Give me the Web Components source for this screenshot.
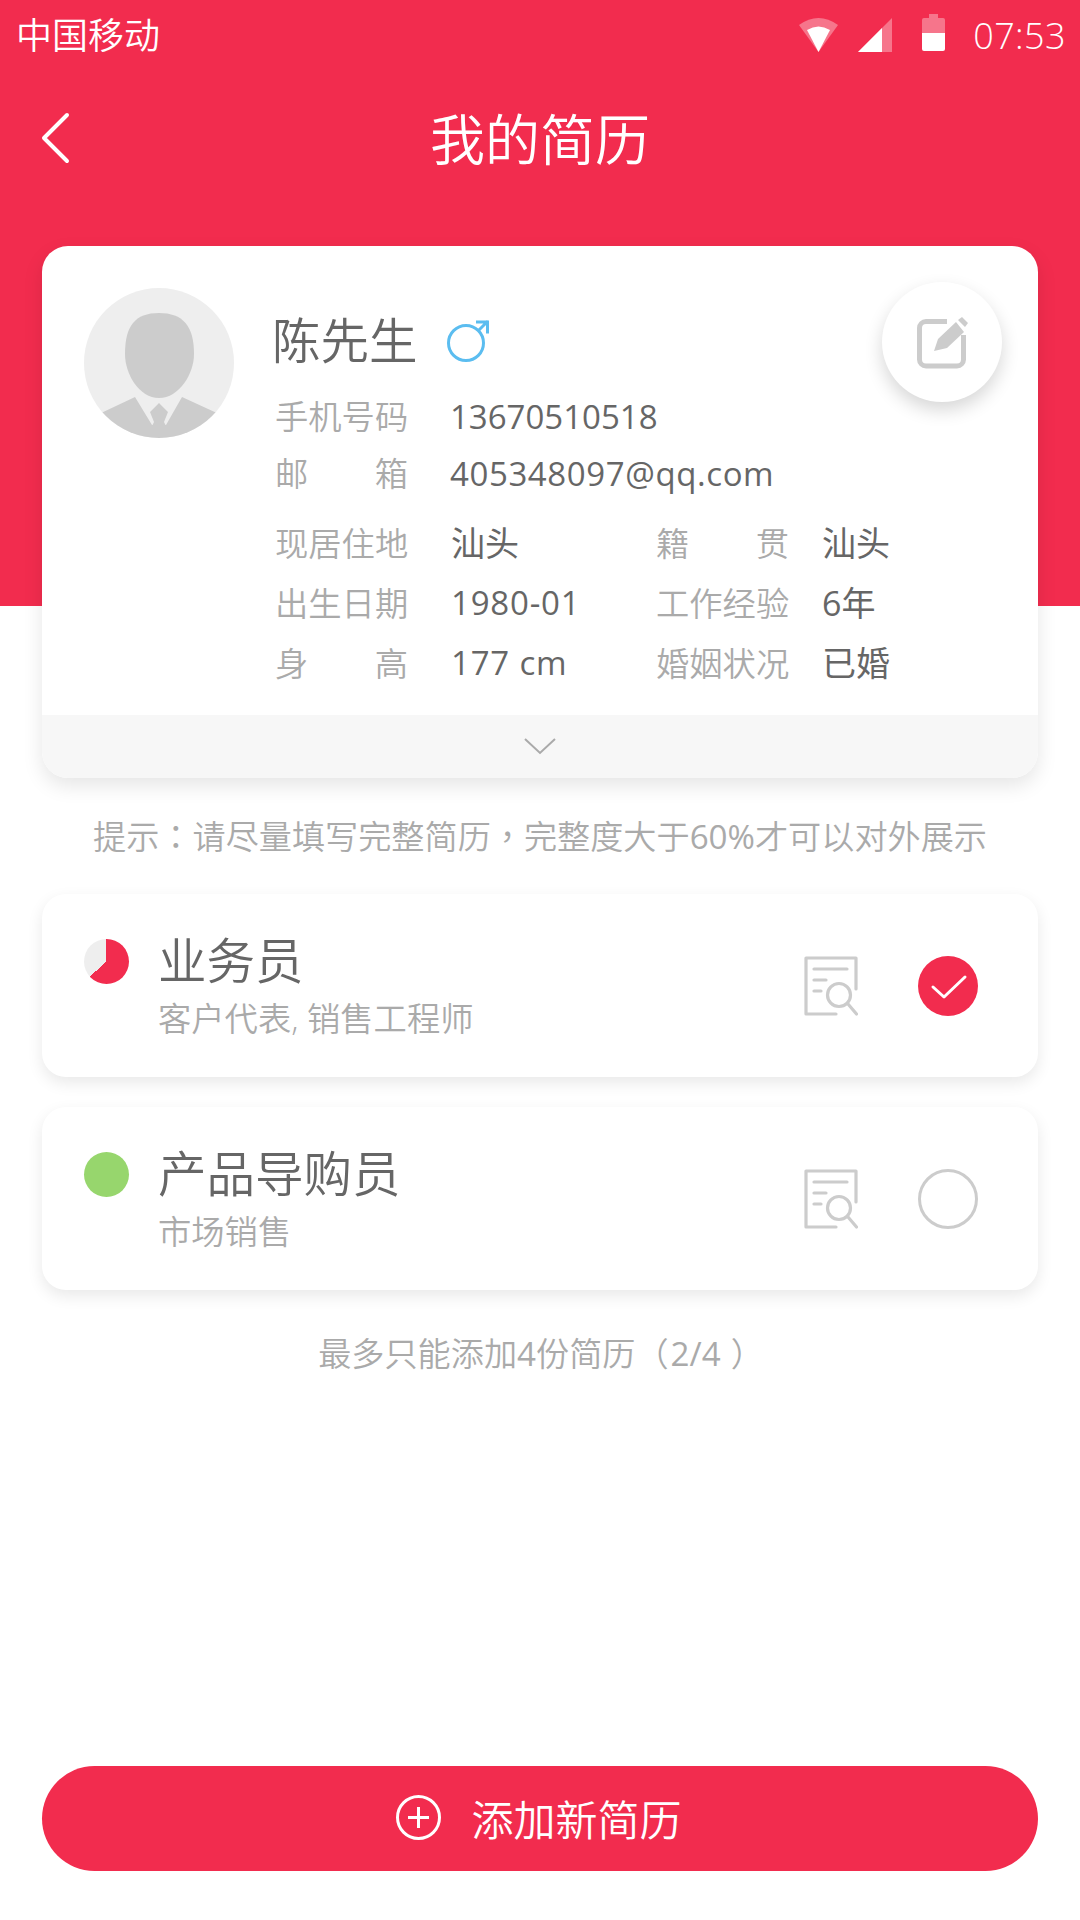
<!DOCTYPE html>
<html lang="zh-CN">
<head>
<meta charset="utf-8">
<title>我的简历</title>
<style>
  html, body { margin: 0; padding: 0; }
  body {
    width: 1080px;
    height: 1920px;
    overflow: hidden;
    display: flex;
    flex-direction: column;
    background: linear-gradient(#f22c4e 606px, #fff 606px);
    font-family: "Open Sans", "Noto Sans CJK SC", sans-serif;
    font-weight: 350;
    color: #666;
  }
  /* centred full-width punctuation, as on the device font */
  .punct { font-family: "Noto Sans CJK TC", sans-serif; }
  .num { font-weight: 400; }
  .gap { margin: 0 10px 0 2px; }
</style>
</head>
<body>
  <status-bar carrier="中国移动" time="07:53"></status-bar>
  <nav-bar title="我的简历"></nav-bar>
  <profile-card name="陈先生">
    <info-row slot="contact" label="手机号码" value="13670510518"></info-row>
    <info-row slot="contact" label="邮箱" value="405348097@qq.com" style="--track:.6px"></info-row>
    <info-row slot="detail" label="现居住地" value="汕头" style="--value-size:34px"></info-row>
    <info-row slot="detail" label="籍贯" value="汕头" short style="--value-size:34px"></info-row>
    <info-row slot="detail" label="出生日期" value="1980-01" style="--track:.8px"></info-row>
    <info-row slot="detail" label="工作经验" value="6年" short style="--value-size:34px"></info-row>
    <info-row slot="detail" label="身高" value="177 cm" style="--track:.8px"></info-row>
    <info-row slot="detail" label="婚姻状况" value="已婚" short style="--value-size:34px"></info-row>
  </profile-card>
  <hint-text top="35" bottom="35">提示<span class="punct" lang="zh-TW">：</span>请尽量填写完整简历<span class="punct" lang="zh-TW">，</span>完整度大于<span class="num">60%</span>才可以对外展示</hint-text>
  <resume-item title="业务员" sub="客户代表, 销售工程师" progress="partial" checked></resume-item>
  <resume-item title="产品导购员" sub="市场销售" progress="full" style="margin-top:30px"></resume-item>
  <hint-text top="40" bottom="0" shift="1">最多只能添加<span class="num">4</span>份简历<span class="punct" lang="zh-TW">（</span><span class="num gap">2/4</span><span class="punct" lang="zh-TW">）</span></hint-text>
  <add-button>添加新简历</add-button>

<script>
class StatusBar extends HTMLElement {
  connectedCallback() {
    this.attachShadow({ mode: 'open' });
    this.shadowRoot.innerHTML = `
      <style>
        :host { display: flex; align-items: center; height: 72px; padding: 0 14px 0 16px; color: #fff; font-size: 36px; }
        .carrier { flex: 1; line-height: 72px; }
        svg { display: block; fill: #fff; }
        .wifi { margin-right: 20px; margin-top: -2px; }
        .signal { margin-right: 30px; margin-top: -2px; }
        .battery { margin-right: 28px; margin-top: -7px; }
        .time { font-size: 36px; line-height: 72px; letter-spacing: .4px; font-weight: 300; }
      </style>
      <span class="carrier">${this.getAttribute('carrier')}</span>
      <svg class="wifi" width="39" height="34" viewBox="0 0 39 34">
        <path d="M19.5 34 L0 7 Q19.5 -7 39 7 Z" fill-opacity=".35"/>
        <path d="M19.5 34 L8 12 Q19.5 5 31 12 Z"/>
      </svg>
      <svg class="signal" width="34" height="34" viewBox="0 0 34 34">
        <path d="M0 34 L34 0 V34 Z" fill-opacity=".35"/>
        <path d="M0 34 L24 10 V34 Z"/>
      </svg>
      <svg class="battery" width="23" height="37" viewBox="0 0 23 37">
        <path d="M7 0 H16 V4 H21 a2 2 0 0 1 2 2 V19 H0 V6 a2 2 0 0 1 2 -2 H7 Z" fill-opacity=".35"/>
        <path d="M0 19 H23 V35 a2 2 0 0 1 -2 2 H2 a2 2 0 0 1 -2 -2 Z"/>
      </svg>
      <span class="time">${this.getAttribute('time')}</span>`;
  }
}

class NavBar extends HTMLElement {
  connectedCallback() {
    this.attachShadow({ mode: 'open' });
    this.shadowRoot.innerHTML = `
      <style>
        :host { display: flex; align-items: center; justify-content: center; position: relative; height: 134px; color: #fff; font-size: 55px; }
        svg { position: absolute; left: 40px; top: 40px; }
        span { line-height: 136px; }
      </style>
      <svg width="30" height="52" viewBox="0 0 30 52" fill="none" stroke="#fff" stroke-width="4" stroke-linecap="round" stroke-linejoin="round">
        <path d="M27 3 L4 26 L27 49"/>
      </svg>
      <span>${this.getAttribute('title')}</span>`;
  }
}

class InfoRow extends HTMLElement {
  connectedCallback() {
    this.attachShadow({ mode: 'open' });
    this.shadowRoot.innerHTML = `
      <style>
        :host { display: flex; font-size: 33px; line-height: inherit; white-space: nowrap; }
        .label { width: 133px; font-size: 33.3px; color: #aaa; text-align: justify; text-align-last: justify; margin-right: 42px; flex: none; margin-left: -1px; }
        :host([slot="detail"]) .label { margin-right: 43px; }
        :host([short]) .label { margin-right: 33px; }
        .value { color: #666; font-weight: 400; font-size: var(--value-size, 33px); letter-spacing: var(--track, 0); }
      </style>
      <span class="label">${this.getAttribute('label')}</span>
      <span class="value">${this.getAttribute('value')}</span>`;
  }
}

class ProfileCard extends HTMLElement {
  connectedCallback() {
    this.attachShadow({ mode: 'open' });
    this.shadowRoot.innerHTML = `
      <style>
        :host { display: block; position: relative; margin: 40px 42px 0; background: #fff; border-radius: 26px; box-shadow: 0 8px 20px rgba(0,0,0,.1); overflow: visible; }
        .top { display: flex; padding: 42px 0 22px 42px; }
        .avatar { display: block; flex: none; margin-right: 42px; }
        .info { padding-top: 20px; }
        .name { display: flex; align-items: center; font-size: 48.5px; line-height: 64px; color: #666; margin-left: -4px; }
        .name svg { margin-left: 29px; margin-top: 1px; }
        .contact { margin-top: 16px; line-height: 57px; }
        .detail { margin-top: 11px; display: grid; grid-template-columns: 381px auto; line-height: 60px; }
        .edit { position: absolute; left: 840px; top: 36px; width: 120px; height: 120px; border-radius: 50%; background: #fff; box-shadow: 0 8px 18px rgba(0,0,0,.16); display: flex; align-items: center; justify-content: center; }
        .edit svg { margin-left: 2px; }
        .more { display: flex; align-items: center; justify-content: center; height: 63px; background: #f7f7f7; border-radius: 0 0 26px 26px; }
      </style>
      <div class="top">
        <svg class="avatar" width="150" height="150" viewBox="0 0 150 150">
          <defs><clipPath id="round"><circle cx="75" cy="75" r="75"/></clipPath></defs>
          <circle cx="75" cy="75" r="75" fill="#eee"/>
          <g clip-path="url(#round)" fill="#ccc">
            <path d="M75 25 C51 25 41 38 41 66 C41 86 55 110 75 110 C95 110 110 86 110 66 C110 38 99 25 75 25 Z"/>
            <path d="M15 126 L51 109 L68 137 L82 137 L98 109 L135 126 V150 H15 Z"/>
            <path d="M75 115 L66 124 L70 134 L67 140 H83 L80 134 L84 124 Z"/>
          </g>
        </svg>
        <div class="info">
          <div class="name">
            <span>${this.getAttribute('name')}</span>
            <svg width="42" height="42" viewBox="0 0 42 42" fill="none" stroke="#5bbdf0" stroke-width="3">
              <circle cx="19" cy="23" r="17.5"/>
              <path d="M31 11 L41 1 M29 2 H40.5 V13.5"/>
            </svg>
          </div>
          <div class="contact"><slot name="contact"></slot></div>
          <div class="detail"><slot name="detail"></slot></div>
        </div>
      </div>
      <div class="edit">
        <svg width="52" height="53" viewBox="0 0 52 53">
          <path d="M30 5.5 H9 a6.5 6.5 0 0 0 -6.5 6.5 V43.500 a6.500 6.500 0 0 0 6.500 6.500 H40 a6.500 6.500 0 0 0 6.500 -6.500 V19" fill="none" stroke="#ccc" stroke-width="5"/>
          <path d="M21 23 L39 6 L47 16 L30 32 L17 35 Z M41 4 L45 1 L51 7 L48 11 Z" fill="#ccc"/>
        </svg>
      </div>
      <div class="more">
        <svg width="32" height="17" viewBox="0 0 32 17" fill="none" stroke="#aaa" stroke-width="2"><path d="M1 1 L16 15 L31 1"/></svg>
      </div>`;
  }
}

class HintText extends HTMLElement {
  connectedCallback() {
    this.attachShadow({ mode: 'open' });
    const shift = this.getAttribute('shift') || 0;
    this.shadowRoot.innerHTML = `
      <style>
        :host { display: block; text-align: center; font-size: 33.150px; line-height: 44px; color: #aaa; white-space: nowrap;
          margin-top: ${this.getAttribute('top')}px; margin-bottom: ${this.getAttribute('bottom')}px; margin-left: ${shift * 2}px; }
      </style>
      <slot></slot>`;
  }
}

class ResumeItem extends HTMLElement {
  connectedCallback() {
    this.attachShadow({ mode: 'open' });
    const pieColor = this.getAttribute('progress') === 'full'
      ? '#97d66d'
      : 'conic-gradient(#f22c4e 0 228deg, #eee 228deg 360deg)';
    const mark = this.hasAttribute('checked')
      ? `<svg width="60" height="60" viewBox="0 0 60 60"><circle cx="30" cy="30" r="30" fill="#f22c4e"/><path d="M15 31 L26 41 L47 21" fill="none" stroke="#fff" stroke-width="3" stroke-linecap="round" stroke-linejoin="round"/></svg>`
      : `<svg width="60" height="60" viewBox="0 0 60 60"><circle cx="30" cy="30" r="28.500" fill="none" stroke="#ccc" stroke-width="3"/></svg>`;
    this.shadowRoot.innerHTML = `
      <style>
        :host { display: flex; align-items: flex-start; height: 183px; margin: 0 42px; background: #fff; border-radius: 24px; box-shadow: 0 6px 16px rgba(0,0,0,.09); }
        .pie { flex: none; width: 45px; height: 45px; border-radius: 50%; margin: 45px 29px 0 42px; background: ${pieColor}; }
        .text { flex: 1; padding-top: 34px; }
        .title { font-size: 48.5px; line-height: 64px; color: #666; }
        .sub { font-size: 33.300px; line-height: 44px; color: #aaa; margin-top: 4px; }
        .actions { display: flex; align-items: center; gap: 60px; padding: 62px 60px 0 0; }
        svg { display: block; }
      </style>
      <div class="pie"></div>
      <div class="text">
        <div class="title">${this.getAttribute('title')}</div>
        <div class="sub">${this.getAttribute('sub')}</div>
      </div>
      <div class="actions">
        <svg width="54" height="60" viewBox="0 0 54 60" fill="none" stroke="#ccc" stroke-width="3.200" stroke-linecap="round" stroke-linejoin="round">
          <path d="M32 58 H2 V2 H52 V33"/>
          <path d="M10 13 H43 M10 24 H22 M10 35 H17"/>
          <circle cx="35" cy="39" r="11.500"/>
          <path d="M44 48 L52.500 58"/>
        </svg>
        ${mark}
      </div>`;
  }
}

class AddButton extends HTMLElement {
  connectedCallback() {
    this.attachShadow({ mode: 'open' });
    this.shadowRoot.innerHTML = `
      <style>
        :host { display: flex; align-items: center; justify-content: center; box-sizing: border-box; height: 105px; padding-bottom: 2px; margin: auto 42px 49px; background: #f22c4e; border-radius: 53px; color: #fff; font-size: 42px; }
        svg { margin-right: 30px; display: block; margin-left: -2px; }
      </style>
      <svg width="45" height="45" viewBox="0 0 45 45" fill="none" stroke="#fff" stroke-width="3">
        <circle cx="22.500" cy="22.500" r="21"/>
        <path d="M12 22.500 H33 M22.500 12 V33"/>
      </svg>
      <slot></slot>`;
  }
}

customElements.define('status-bar', StatusBar);
customElements.define('nav-bar', NavBar);
customElements.define('info-row', InfoRow);
customElements.define('profile-card', ProfileCard);
customElements.define('hint-text', HintText);
customElements.define('resume-item', ResumeItem);
customElements.define('add-button', AddButton);
</script>
</body>
</html>
